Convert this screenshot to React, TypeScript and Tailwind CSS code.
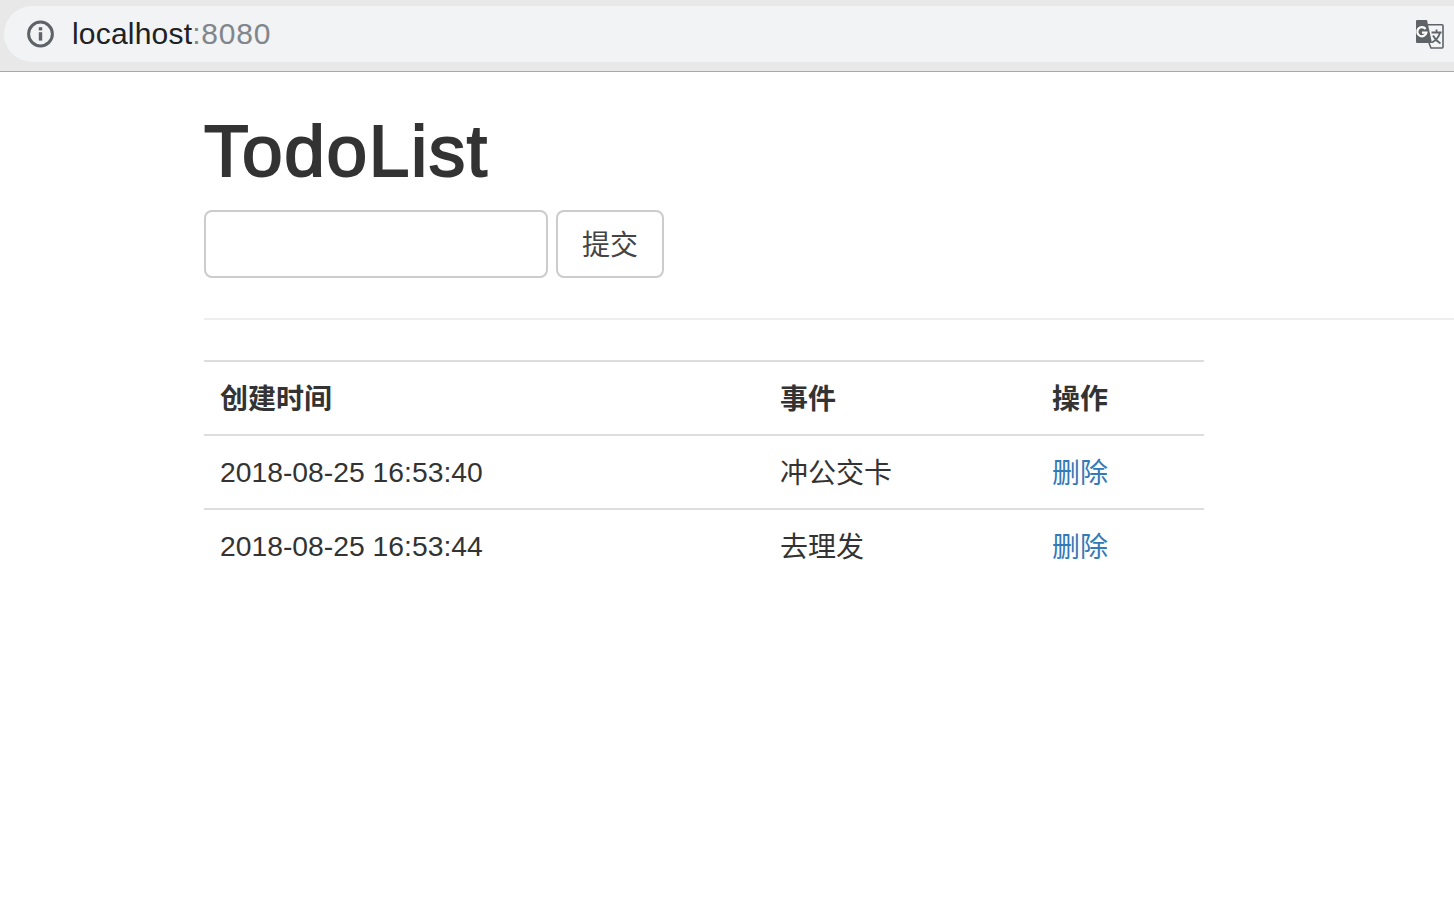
import React from "react";

const sans = "font-['Liberation_Sans','Noto_Sans_CJK_SC',sans-serif]";

const rows = [
    { time: "2018-08-25 16:53:40", event: "冲公交卡" },
    { time: "2018-08-25 16:53:44", event: "去理发" },
];

const InfoIcon = () => (
    <svg width="28" height="28" viewBox="0 0 28 28" fill="none" className="translate-x-[0.5px]">
        <circle cx="14" cy="14" r="11.9" stroke="#5f6368" strokeWidth="3" />
        <rect x="12.3" y="12.2" width="3.4" height="8.4" fill="#5f6368" />
        <rect x="12.3" y="7.2" width="3.4" height="3.2" fill="#5f6368" />
    </svg>
);

const TranslateIcon = () => (
    <svg width="30" height="30" viewBox="0 0 30 30">
        <path d="M14 5.8H28a1 1 0 0 1 1 1V28a1 1 0 0 1-1 1H17l-2-5" fill="#f4f5f6" stroke="#5f6368" strokeWidth="1.6" />
        <path d="M3 1H13L18 24H3a1 1 0 0 1-1-1V2a1 1 0 0 1 1-1z" fill="#5f6368" />
        <path d="M11.6 10A4.6 4.6 0 1 0 12.4 13.6H8" fill="none" stroke="#fff" strokeWidth="2.2" />
        <path d="M17.5 13.5h10M22.5 10.5v3M26 13.5c-1 4-4.500 8-8 10M19 16.500c1.500 3 4 6 7.500 8" fill="none" stroke="#5f6368" strokeWidth="1.8" />
    </svg>
);

const AddressBar = () => (
    <div className="h-[72px] bg-[#e8e8e8] border-b border-[#a8a8a8] pt-[6px] pl-1">
        <div className="h-[56px] bg-[#f1f3f4] rounded-l-[28px] flex items-center pl-[22px] pr-[10px]">
            <InfoIcon />
            <span className={`ml-[18px] text-[30px] tracking-[0.2px] leading-none ${sans} text-[#202124]`}>
                localhost<span className="text-[#80868b] tracking-[0.8px]">:8080</span>
            </span>
            <span className="ml-auto flex">
                <TranslateIcon />
            </span>
        </div>
    </div>
);

const TodoTable = () => (
    <table className="w-[1000px] table-fixed border-collapse text-[28px] leading-[40px] text-[#333]">
        <colgroup>
            <col className="w-[560px]" />
            <col className="w-[272px]" />
            <col className="w-[168px]" />
        </colgroup>
        <thead>
            <tr className="border-t-2 border-[#ddd]">
                <th className="px-4 pt-[18px] pb-[14px] text-left font-bold">创建时间</th>
                <th className="px-4 pt-[18px] pb-[14px] text-left font-bold">事件</th>
                <th className="px-4 pt-[18px] pb-[14px] text-left font-bold">操作</th>
            </tr>
        </thead>
        <tbody>
            {rows.map((row, index) => (
                <tr key={index} className="border-t-2 border-[#ddd]">
                    <td className="p-4 text-[28.3px]">{row.time}</td>
                    <td className="px-4 pt-[18px] pb-[14px]">{row.event}</td>
                    <td className="px-4 pt-[18px] pb-[14px]">
                        <a href="#" className="text-[#337ab7]">删除</a>
                    </td>
                </tr>
            ))}
        </tbody>
    </table>
);

export default function App() {
    return (
        <div className={`min-h-[910px] bg-white ${sans}`}>
            <AddressBar />
            <div className="pl-[204px]">
                <h1 className="pt-[40px] text-[73px] leading-[78px] tracking-[1.6px] font-normal text-[#333] [-webkit-text-stroke:2px_#333]">TodoList</h1>
                <form className="flex gap-2 mt-5">
                    <input className="w-[344px] h-[68px] border-2 border-[#ccc] rounded-lg bg-white" />
                    <button type="button" className="w-[108px] h-[68px] pt-1 border-2 border-[#ccc] rounded-lg bg-white text-[28px] text-[#444]">
                        提交
                    </button>
                </form>
                <hr className="mt-10 mb-10 border-t-2 border-[#eee]" />
                <TodoTable />
            </div>
        </div>
    );
}
